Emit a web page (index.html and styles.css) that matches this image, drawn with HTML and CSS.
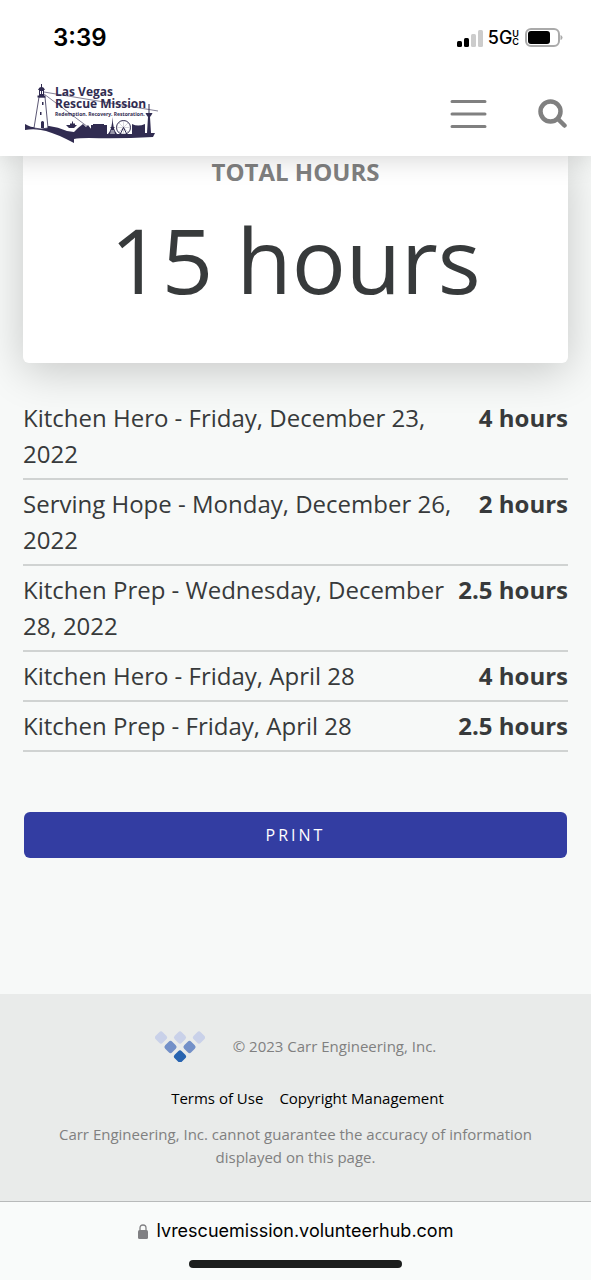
FILE: index.html
```html
<!DOCTYPE html>
<html lang="en">
  <head>
    <meta charset="utf-8">
    <meta name="viewport" content="width=device-width, initial-scale=1">
    <title>Volunteer Hours</title>
    <link rel="stylesheet" href="styles.css">
  </head>

  <body>
    <header class="top">
      <div class="status">
        <span class="clock">3:39</span>
        <div class="signals">
          <svg width="26" height="18" viewBox="0 0 26 18" aria-hidden="true">
            <rect x="0" y="12" width="5" height="6" rx="1.5" />
            <rect x="7" y="9" width="5" height="9" rx="1.5" />
            <rect x="14" y="5" width="5" height="13" rx="1.5" fill="#ccc" />
            <rect x="21" y="1" width="5" height="17" rx="1.5" fill="#ccc" />
          </svg>
          <span class="network">5G</span>
          <span class="uc"><span>U</span><span>C</span></span>
          <svg class="battery" width="38" height="20" viewBox="0 0 38 20" aria-hidden="true">
            <rect x="1" y="1" width="33" height="17" rx="5" fill="none" stroke="#aaa" stroke-width="2" />
            <rect x="3" y="3" width="22" height="13" rx="3" />
            <path d="M35.500 7q2 .5 2 2.500t-2 2.500z" fill="#aaa" />
          </svg>
        </div>
      </div>
      <nav class="nav">
        <a class="logo" href="#" aria-label="Las Vegas Rescue Mission">
          <svg width="136" height="60" viewBox="0 0 136 60" fill="#312c51">
            <g fill="none" stroke="#312c51" stroke-width=".6">
              <path d="M20 8L134 27M20 10L68 46" />
              <circle cx="99.500" cy="43.500" r="7" stroke-width="1" />
              <path d="M99.500 36.500v14M92.500 43.500h14M94.500 38.500l10 10M104.500 38.500l-10 10" stroke-width=".2" />
              <path d="M99.500 43.500l-4 8M99.500 43.500l4 8" stroke-width="1" />
            </g>
            <path d="M1 40Q9 45 18 43L25 42Q34 43 43 47L50 48L54 44L59 40L62 43L64 41L67 45V41H69V40H80V41H83V50H84Q88 46 88.500 33Q89 46 93 50H108V40Q114 43 121 40V49H123L124 33H126L127 49H131L129 53Q95 55 65 54Q55 54 50 55V59Q33 50 22 47Q11 44 1 46Z" />
            <path d="M87 46h3l1 4h-5z" fill="#fff" opacity=".5" />
            <path d="M86.500 43h4v1h-4zM121.500 29h7l-1 2-1.500 2h-2l-1.500-2z" />
            <path d="M124.500 20h1v10h-1z" />
            <path d="M42 41h4v-1.500h2v-2h1v2h2V41h2l-3 3h-5z" />
            <path d="M15 13h6l3 31q-7 2-14 0z" fill="#fff" stroke="#312c51" stroke-width=".8" />
            <path d="M13.500 11.500h8v2h-8zM15 6h5v6h-5zM14 6q1-3 3-3V0h1v3q2 0 3 3z" />
            <path d="M16 7h1v3h-1zM18 7h1v3h-1z" fill="#fff" />
            <path d="M18 18h1.500v3H18zM16 28h1.500v3H16zM17 38q1.500-2 3 0v6h-3z" />
            <g class="logo-text">
              <text x="31" y="12" font-size="12">Las Vegas</text>
              <text x="31" y="24" font-size="12">Rescue Mission</text>
              <text x="31" y="32" font-size="5">Redemption. Recovery. Restoration.</text>
            </g>
          </svg>
        </a>
        <div class="actions">
          <button class="icon" type="button" aria-label="Menu">
            <svg width="37" height="28" viewBox="0 0 37 28" fill="none" stroke="#808080" stroke-width="3" stroke-linecap="round">
              <path d="M2 1.500h33M2 14h33M2 26.500h33" />
            </svg>
          </button>
          <button class="icon" type="button" aria-label="Search">
            <svg width="29" height="29" viewBox="0 0 29 29" fill="none" stroke="#808080">
              <circle cx="12.500" cy="12.500" r="10" stroke-width="4.500" />
              <path d="M20 20l6.500 6.500" stroke-width="4.500" stroke-linecap="round" />
            </svg>
          </button>
        </div>
      </nav>
    </header>

    <main class="content">
      <section class="card">
        <h2 class="card-title">TOTAL HOURS</h2>
        <p class="total">15 hours</p>
      </section>

      <table class="hours">
        <tr>
          <td>Kitchen Hero - Friday, December 23, 2022</td>
          <td class="amount">4 hours</td>
        </tr>
        <tr>
          <td>Serving Hope - Monday, December 26, 2022</td>
          <td class="amount">2 hours</td>
        </tr>
        <tr>
          <td>Kitchen Prep - Wednesday, December 28, 2022</td>
          <td class="amount">2.5 hours</td>
        </tr>
        <tr>
          <td>Kitchen Hero - Friday, April 28</td>
          <td class="amount">4 hours</td>
        </tr>
        <tr>
          <td>Kitchen Prep - Friday, April 28</td>
          <td class="amount">2.5 hours</td>
        </tr>
      </table>

      <div class="print-row">
        <button class="print" type="button">PRINT</button>
      </div>
    </main>

    <footer class="footer">
      <div class="copyright">
        <svg width="50" height="32" viewBox="0 -1 50 32" aria-hidden="true">
          <g fill="#c9d1e9">
            <rect x="1" y="1.500" width="10" height="10" rx="2.5" transform="rotate(45 6 6.500)" />
            <rect x="20" y="1.500" width="10" height="10" rx="2.5" transform="rotate(45 25 6.500)" />
            <rect x="39" y="1.500" width="10" height="10" rx="2.5" transform="rotate(45 44 6.500)" />
          </g>
          <g fill="#7390c8">
            <rect x="10.500" y="11" width="10" height="10" rx="2.5" transform="rotate(45 15.500 16)" />
            <rect x="29.500" y="11" width="10" height="10" rx="2.5" transform="rotate(45 34.500 16)" />
          </g>
          <rect x="20" y="20.500" width="10" height="10" rx="2.5" transform="rotate(45 25 25.500)" fill="#2864b0" />
        </svg>
        <span>© 2023 Carr Engineering, Inc.</span>
      </div>
      <div class="legal">
        <a href="#">Terms of Use</a>
        <a href="#">Copyright Management</a>
      </div>
      <p class="disclaimer">Carr Engineering, Inc. cannot guarantee the accuracy of information displayed on this page.</p>
    </footer>

    <div class="browser-bar">
      <div class="address">
        <svg width="10" height="15" viewBox="0 0 10 15" aria-hidden="true">
          <path d="M2 7V4q0-3 3-3t3 3v3" fill="none" stroke="#808083" stroke-width="1.300" />
          <rect x="0" y="6" width="10" height="9" rx="1.500" fill="#808083" />
        </svg>
        <span>lvrescuemission.volunteerhub.com</span>
      </div>
      <div class="home"></div>
    </div>
  </body>
</html>
```
FILE: styles.css
```css
* {
  box-sizing: border-box;
}

body {
  margin: 0;
  background-color: #f7f9f8;
  color: #373a3b;
  font-family: "Open Sans", sans-serif;
}

button {
  border: none;
  cursor: pointer;
  font-family: inherit;
}

.top {
  position: relative;
  z-index: 1;
  padding-bottom: 6px;
  background-color: white;
  box-shadow: 0 0 28px rgba(0, 0, 0, 0.2);
}

.status {
  display: flex;
  justify-content: space-between;
  align-items: center;
  height: 75px;
  padding: 0 28px 0 53px;
  color: black;
  font-family: Inter, sans-serif;
}

.clock {
  font-size: 24px;
  font-weight: 600;
}

.signals {
  display: flex;
  align-items: center;
}

.network {
  margin-left: 5px;
  font-size: 18px;
  font-weight: 500;
}

.uc {
  display: flex;
  flex-direction: column;
  margin-right: 6px;
  font-size: 9px;
  font-weight: 600;
  line-height: 8px;
}

.nav {
  display: flex;
  justify-content: space-between;
  align-items: center;
  height: 75px;
  padding: 2px 24px 0;
}

.logo svg {
  display: block;
}

.logo-text {
  font-weight: 700;
}

.actions {
  display: flex;
  align-items: center;
  gap: 51px;
}

.icon {
  display: flex;
  padding: 0;
  background: none;
}

.content {
  padding: 0 23px 136px;
}

.card {
  padding-bottom: 32px;
  border-radius: 0 0 6px 6px;
  background-color: white;
  box-shadow: 0 8px 44px rgba(0, 0, 0, 0.2);
  text-align: center;
}

.card-title {
  margin: 0;
  color: #808080;
  font-size: 24px;
  line-height: 31px;
}

.total {
  margin: 0;
  font-size: 90px;
  line-height: 144px;
}

.hours {
  width: 100%;
  margin: 31px 0 60px;
  border-collapse: collapse;
  font-size: 24px;
  line-height: 36px;
}

.hours td {
  padding: 6px 0;
  border-bottom: 2px solid #d0d3d2;
  vertical-align: top;
}

.hours .amount {
  width: 1%;
  font-weight: 700;
  text-align: right;
  white-space: nowrap;
}

.print-row {
  padding: 0 1px;
}

.print {
  display: block;
  width: 100%;
  height: 46px;
  border-radius: 6px;
  background-color: #333da2;
  color: white;
  font-size: 16px;
  letter-spacing: 3px;
}

.footer {
  padding: 36px 40px 32px;
  background-color: #e9ebea;
  color: #808080;
  font-size: 15px;
  line-height: 23px;
  text-align: center;
}

.copyright {
  display: flex;
  justify-content: center;
  align-items: center;
  gap: 28px;
}

.legal {
  display: flex;
  justify-content: center;
  gap: 16px;
  margin: 25px 0 13px;
  padding-left: 24px;
}

.legal a {
  color: black;
  text-decoration: none;
}

.disclaimer {
  margin: 0;
}

.browser-bar {
  padding: 18px 0 12px;
  border-top: 1px solid #b8baba;
  background-color: #f9fbfa;
  color: black;
  font-family: Inter, sans-serif;
  font-size: 18px;
  line-height: 22px;
}

.address {
  display: flex;
  justify-content: center;
  align-items: center;
  gap: 9px;
}

.home {
  width: 36%;
  height: 8px;
  margin: 18px auto 0;
  border-radius: 4px;
  background-color: #1c1e1d;
}
```
